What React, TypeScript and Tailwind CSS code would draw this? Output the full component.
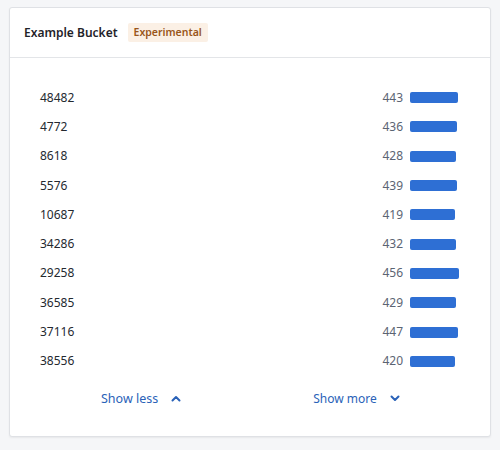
import React from 'react';

const ROWS: [string, number][] = [
  ['48482', 443],
  ['4772', 436],
  ['8618', 428],
  ['5576', 439],
  ['10687', 419],
  ['34286', 432],
  ['29258', 456],
  ['36585', 429],
  ['37116', 447],
  ['38556', 420],
];

function ChevronUp() {
  return (
    <svg width="10" height="7" viewBox="0 0 10 7" fill="none">
      <path d="M1.5 5.5L5 2L8.5 5.5" stroke="#2a62b8" strokeWidth="2" strokeLinecap="round" strokeLinejoin="round" />
    </svg>
  );
}

function ChevronDown() {
  return (
    <svg width="10" height="7" viewBox="0 0 10 7" fill="none">
      <path d="M1.5 1.5L5 5L8.5 1.5" stroke="#2a62b8" strokeWidth="2" strokeLinecap="round" strokeLinejoin="round" />
    </svg>
  );
}

export default function App() {
  return (
    <div className="min-h-[450px] bg-[#f5f6f8] pl-[9px] pr-[9px] pt-[7px] font-['Noto_Sans',sans-serif]">
      <div className="w-[482px] h-[430px] bg-white border border-[#dfe1e5] rounded-[3px] shadow-[0_1px_2px_rgba(0,0,0,0.06)] flex flex-col">
        {/* Header */}
        <div className="h-[50px] border-b border-[#e3e5e8] flex items-center pl-[14px] gap-[10px]">
          <span className="text-[12px] font-semibold text-[#1f2329]">Example Bucket</span>
          <span className="h-[19px] px-[6px] flex items-center rounded-[2px] bg-[#fbf0e5] text-[10.5px] font-semibold text-[#99561a]">
            Experimental
          </span>
        </div>

        {/* Rows */}
        <div className="pt-[25px] px-[30px]">
          {ROWS.map(([key, value]) => (
            <div key={key} className="h-[29.3px] flex items-center">
              <span className="flex-1 text-[12px] text-[#24292f]">{key}</span>
              <span className="text-[12px] text-[#5b6473] w-[40px] text-right">{value}</span>
              <div className="w-[50px] ml-[7px] flex">
                <div
                  className="h-[11px] rounded-[2px] bg-[#2e6fd4]"
                  style={{ width: Math.round(value * 0.1073) }}
                />
              </div>
            </div>
          ))}
        </div>

        {/* Footer */}
        <div className="flex items-center mt-[9px] h-[28px]">
          <button className="ml-[91px] flex items-center gap-[13px] text-[12.5px] text-[#2a62b8]">
            Show less
            <ChevronUp />
          </button>
          <button className="ml-[132px] flex items-center gap-[13px] text-[12px] text-[#2a62b8]">
            Show more
            <ChevronDown />
          </button>
        </div>
      </div>
    </div>
  );
}
